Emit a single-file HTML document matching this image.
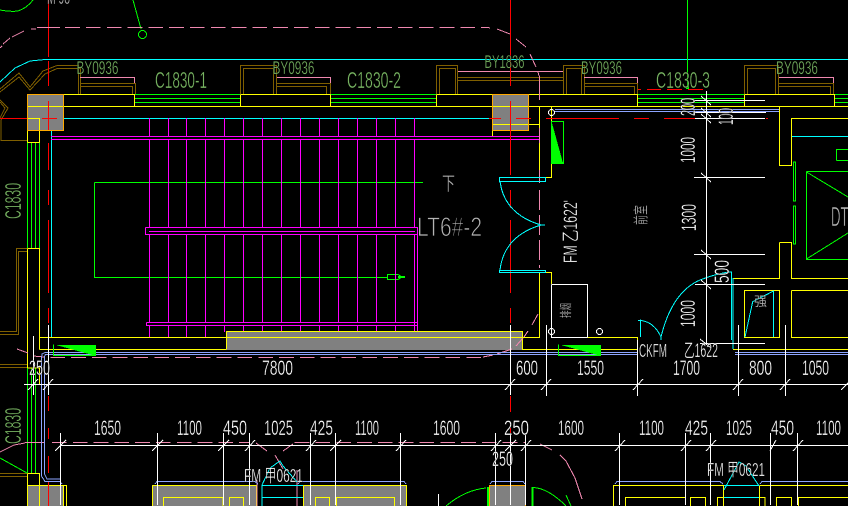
<!DOCTYPE html>
<html><head><meta charset="utf-8"><style>
html,body{margin:0;padding:0;background:#000;width:848px;height:506px;overflow:hidden}
svg{display:block}
text{font-family:"Liberation Sans","Noto Sans CJK SC",sans-serif;stroke:#000;stroke-width:.35px}
.d text,text.d{fill:#fff;font-size:21px}
.g text{fill:#78b562;font-size:18.5px}
.c text{fill:#78b562;font-size:23px}
.h text{fill:#b4b4b4;stroke-width:.6px}
path,rect,circle{fill:none}
</style></head><body>
<svg width="848" height="506" viewBox="0 0 848 506" xmlns="http://www.w3.org/2000/svg" shape-rendering="crispEdges">
<rect x="0" y="0" width="848" height="506" style="fill:#000"/>
<!-- grey fills -->
<g style="fill:#808080">
<rect x="27" y="94" width="37" height="36" style="fill:#808080"/>
<rect x="492" y="94" width="37" height="36" style="fill:#808080"/>
<rect x="226" y="331" width="297" height="19" style="fill:#808080"/>
<rect x="27" y="485" width="37" height="21" style="fill:#808080"/>
<rect x="152" y="485" width="104" height="21" style="fill:#808080"/>
<rect x="303" y="485" width="103" height="21" style="fill:#808080"/>
<rect x="489" y="485" width="37" height="21" style="fill:#808080"/>
</g>
<!-- brown -->
<path stroke="#7f5f00" d="M78.5 94V65.5H57L43 71 30 87 19 73 0 89M80.5 94V68.5H57L45 74 30 90 19 77 0 92M0 100L8 108 1 120V140.5H27M0 102L5 108 0 118M80 83.5H135.5V94M80 86.5H132.5V94
M240.5 94V65.5H276.5V94M243.5 94V68.5H273.5V94M277 83.5H330.5V94M277 86.5H326.5V94
M436.5 94V65.5H457.5V94M439.5 94V68.5H455.5V94M458 77.5H563M458 80.5H563M563.5 94V65.5H584.5V94M566.5 94V68.5H581.5V94
M584 83.5H637.5V94M584 86.5H634.5V94M744.5 94V65.5H778.5V94M747.5 94V68.5H775.5V94M779 83.5H833.5V94M779 86.5H830.5V94
M27 248.5H16.5V331.5H0M27 251.5H18.5V334.5H0M0 364.5H27M0 367.5H27M0 473.5H27M0 476.5H27"/>
<!-- pink solid -->
<path stroke="#f088b0" d="M80 77.5H134.5V83M277 77.5H330.5V83M458 71.5H563M584 77.5H637.5V83M779 77.5H833.5V83"/>
<!-- cyan structure -->
<path stroke="#00ffff" d="M45 59.5H848M45 59.5L30 61 15 68 0 82M64 118.5H489M51.5 130V337M792 136.5H848"/>
<!-- window green -->
<path stroke="#00ff00" d="M134 94.5H240M134 98.5H240M134 102.5H240M134 106.5H240M330 94.5H436M330 98.5H436M330 102.5H436M330 106.5H436M638 94.5H744M638 98.5H744M638 102.5H744M638 106.5H744M834 94.5H848M834 98.5H848M834 102.5H848M834 106.5H848
M27.5 142V248M31.5 142V248M35.5 142V248M39.5 142V248M27.5 368V473M31.5 368V473M35.5 368V473
M94.5 182.5H423M94.5 182.5V277.5H388M387.5 274.5H398L402 277 398 279.5H387.5Z
M687.5 0V88M836.5 160.5V149.5H848M836.5 160.5H848M793.5 162V201H795.5V162ZM793.5 206V244H795.5V206Z
M806.5 171.5H848M806.5 171.5V259.5H848M806.5 172L848 197M806.5 259L848 233
M133 0L141 29M0 10Q10 12 18 11 27 8 33 0M0 458L27 473M446 506Q465 490 486 488M487.5 487V506M488.5 487V506M532 487V506M533 487V506M533 487.5Q548 488 566 506M566 495L571 506"/>
<circle cx="142.5" cy="34.5" r="4" stroke="#00ff00"/>
<path stroke="#00ff00" stroke-width="2" d="M398 277H405"/>
<rect x="686" y="86" width="3" height="3" style="fill:#00ff00"/>
<!-- stair magenta -->
<path stroke="#ff00ff" d="M51 136.5H539M51 139.5H539
M149.5 118V136M168.5 118V136M186.5 118V136M205.5 118V136M224.5 118V136M243.5 118V136M262.5 118V136M281.5 118V136M300.5 118V136M319.5 118V136M338.5 118V136M357.5 118V136M376.5 118V136M395.5 118V136M414.5 118V136
M149.5 140V227M168.5 140V227M186.5 140V227M205.5 140V227M224.5 140V227M243.5 140V227M262.5 140V227M281.5 140V227M300.5 140V227M319.5 140V227M338.5 140V227M357.5 140V227M376.5 140V227M395.5 140V227M414.5 140V227
M149.5 235V322M168.5 235V322M186.5 235V322M205.5 235V322M224.5 235V322M243.5 235V322M262.5 235V322M281.5 235V322M300.5 235V322M319.5 235V322M338.5 235V322M357.5 235V322M376.5 235V322M395.5 235V322M414.5 235V332
M149.5 326V337M168.5 326V337M186.5 326V337M205.5 326V337M224.5 326V332M243.5 326V332M262.5 326V332M281.5 326V332M300.5 326V332M319.5 326V332M338.5 326V332M357.5 326V332M376.5 326V332M395.5 326V332
M417.5 227V332M145.5 227.5H417M145.5 227.5V234.5H417M149 231.5H415M146.5 322.5H417M146.5 322.5V325.5H417"/>
<!-- yellow -->
<path stroke="#ffff00" d="M27.5 94.5H134.5V106.5M240.5 94.5H330.5M240.5 94.5V106.5M330.5 94.5V106.5M436.5 94.5H637.5V106.5M436.5 94.5V106.5M744.5 94.5H834.5V106.5M744.5 94.5V106.5M27.5 106.5H848
M27.5 118.5H39.5V142.5M27.5 142.5H39.5M27.5 130V142.5
M492.5 130V136M492.5 124.5H539.5M539.5 106.5V177.5H551.5V106.5M539.5 272.5H551.5V284M539.5 272.5V337.5H522
M27.5 248.5H39.5V349.5M27.5 248.5V368M39.5 337.5H226M587 337.5H637.5V349.5M39.5 349.5H226M522 349.5H637.5M733 349.5H848M733 278.5V349
M226.5 331.5H522.5V349.5M226.5 331.5V349.5M226.5 337.5H522.5
M779.5 106.5V165.5H791.5V118.5H848M791.5 118.5V165M779.5 242.5H791.5V278.5H848M779.5 242.5V278.5H733M744.5 290.5H779.5V337.5H744.5ZM791.5 290.5V337.5H848M791.5 290.5H848
M27.5 368H39.5V384M27.5 473.5H39.5V506M27.5 473.5V506M27.5 485.5H66.5V506M63.5 485V506
M152.5 485.5H256.5M152.5 485.5V506M256.5 485.5V506M163.5 506V497.5H223V506M229.5 506V497.5H243.5V506
M303.5 485.5H406.5V506M303.5 485.5V506M315.5 506V497.5H329.5V506M336.5 506V497.5H394.5V506
M613.5 506V485.5H723.5V506M625.5 506V497.5H685M690.5 506V497.5H705.5V506M717.5 506V497.5H765V506M759.5 485.5H848M759.5 485.5V506M776.5 506V497.5H791.5V506M798.5 506V497.5H848"/>
<!-- orange outlines -->
<path stroke="#ffaa00" d="M27.5 94.5H63.5V130.5H27.5ZM492.5 94.5H528.5V130.5H492.5ZM489.5 506V485.5H525.5V506"/>
<!-- red -->
<path stroke="#ff0000" d="M48.5 0V57M48.5 61V86M48.5 101V130M48.5 143V170M48.5 190V205M48.5 220V293M48.5 308V323M48.5 396V411M48.5 428V439M48.5 456V473M48.5 481V506
M510.5 0V86M510.5 101V175M510.5 190V208M510.5 220V293M510.5 308V323M510.5 396V412M510.5 428V436
M0 118.5H27M42 118.5H57M489 118.5H501M516 118.5H531M546 118.5H619M634 118.5H649M664 118.5H695M766 118.5H768
M638 89.5H641M647 89.5H661M667 89.5H682M688 89.5H703"/>
<!-- pink dashed -->
<g stroke="#f088b0">
<path d="M37 27.5H60M481 27.5H488L490 28M497 29L510 34M516 39L526 47M530 54L536 67M538 72L539 76M0 48L2 46M3 44L10 38M12 37L24 31M31 29H36"/>
<path stroke-dasharray="14.7 6.1" d="M65.2 27.5H481"/>
<path d="M539.5 76V100M539.5 128V143M539.5 170V183M524 337L528 331M532 325L538 314M483 357L493 355M497 354L512 349M516 346L523 338M17 349L28 353M33 356L45 357"/>
<path stroke-dasharray="20 5" d="M539.5 190V268"/>
<path stroke-dasharray="14.7 6.1" d="M50.3 357.5H483"/>
<path stroke-dasharray="14.7 6.1" d="M52 442.5H250"/>
<path stroke-dasharray="14.7 6.1" d="M294.7 442.5H525"/>
<path d="M25 442.5H45M0 452L14 445 25 443M256 443L267 451M275 455L283 469M283 451L293 444M297 470V506M257 480V506M540 444L552 450M560 455L566 461L575 478 582 499"/>
</g>
<!-- blue -->
<path stroke="#8ca4ff" d="M45 352.5H637M45 354.5H637M735 352.5H848M735 354.5H848M45 352.5L42 354 41.5 358V476L45 481.5H60L62 484M45 354.5 44.5 358V474L47 479H60M555 109.5H779M555 111.5H779
M155 484L157 481.5H255L258 484M298 484L300 481.5H404L406 484M490 484L492 481.5H523L525 484M615 484L617 481.5H720L723 484M760 484L762 481.5H848"/>
<!-- cyan doors -->
<path stroke="#00ffff" d="M499.5 177.5H545.5V181.5H499.5ZM500 181Q504 214 541 225H545M499.5 270.5H545.5V272.5H499.5ZM500 270Q504 236 541 225
M661 337Q672 292 700 280 715 274 729 272H731.5V340M733 278V349M640.5 319.5V337M638 320.5H641Q654 322 661 337V340
M745 337L752.7 301.7 773.5 291V337
M262 485L270 468 280 461 283 466 297 482M262.5 485.5H303M262.5 497.5H303M262 485V506
M724 490L739 462 746 466 759 486M724 485.5H759M724 497.5H759"/>
<!-- green triangles -->
<polygon points="552,123 563,163 552,163" style="fill:#00ff00"/>
<rect x="551.5" y="121.5" width="12" height="42" stroke="#00ff00"/>
<polygon points="56,345 96,345 96,356" style="fill:#00ff00"/>
<path stroke="#00ff00" d="M53.5 344.5V355.5H95.5"/>
<polygon points="561,345 601,345 601,356" style="fill:#00ff00"/>
<path stroke="#00ff00" d="M558.5 344.5V355.5H601"/>
<!-- white lines -->
<path stroke="#ffffff" d="M706.5 91V343M695 100.5H765M695 112.5H766M695 118.5H765M694 177.5H765M694 254.5H765M695 284.5H765M700 343.5H765
M551.5 284.5H587.5V337.5M551.5 284.5V337.5H587.5
M24 384.5H848M33.5 336V395M48.5 325V395M510.5 325V395M546.5 325V396M637.5 340V396M738.5 325V396M785.5 325V396
M60 445.5H848M60.5 433V505M157.5 433V505M223.5 433V505M249.5 433V505M310.5 433V505M335.5 433V505M400.5 433V505M495.5 433V505M510.5 433V505M525.5 433V505M619.5 433V505M685.5 433V505M710.5 433V505M770.5 433V505M797.5 433V505M438.5 494V506
M28 390L38 379M43 390L53 379M505 390L515 379M541 390L551 379M633 390L643 379M733 390L743 379M780 390L790 379M841 390L848 383
M55 451L66 440M152 451L163 440M218 451L229 440M245 451L255 440M306 451L316 440M330 451L341 440M396 451L406 440M491 451L501 440M505 451L516 440M521 451L531 440M615 451L625 440M681 451L691 440M706 451L716 440M770 451L776 440M793 451L803 440
M701 96L711 105M701 108L711 117M701 114L711 123M701 173L711 182M701 250L711 259M701 280L711 289M700 339L711 348"/>
<circle cx="551.5" cy="112.5" r="3" stroke="#fff"/>
<circle cx="551.5" cy="331.5" r="3" stroke="#fff"/>
<circle cx="599.5" cy="331.5" r="3" stroke="#fff"/>
<!-- green labels -->
<g class="g" text-rendering="geometricPrecision">
<text x="76.5" y="74" textLength="42" lengthAdjust="spacingAndGlyphs">BY0936</text>
<text x="272.5" y="74" textLength="42" lengthAdjust="spacingAndGlyphs">BY0936</text>
<text x="484.5" y="68" textLength="40" lengthAdjust="spacingAndGlyphs">BY1836</text>
<text x="581" y="74" textLength="41" lengthAdjust="spacingAndGlyphs">BY0936</text>
<text x="776" y="74" textLength="42" lengthAdjust="spacingAndGlyphs">BY0936</text>
</g>
<g class="c">
<text x="155" y="88" textLength="52" lengthAdjust="spacingAndGlyphs">C1830-1</text>
<text x="347" y="88" textLength="54" lengthAdjust="spacingAndGlyphs">C1830-2</text>
<text x="656" y="88" textLength="54" lengthAdjust="spacingAndGlyphs">C1830-3</text>
<text transform="translate(21,219) rotate(-90)" textLength="36" lengthAdjust="spacingAndGlyphs">C1830</text>
<text transform="translate(21,444) rotate(-90)" textLength="36" lengthAdjust="spacingAndGlyphs">C1830</text>
</g>
<!-- dim text -->
<g class="d">
<text x="47" y="4" textLength="23" lengthAdjust="spacingAndGlyphs" style="fill:#bbb">M 98</text>
<text x="262" y="375" textLength="31" lengthAdjust="spacingAndGlyphs">7800</text>
<text x="516" y="375" textLength="22" lengthAdjust="spacingAndGlyphs">600</text>
<text x="577" y="375" textLength="27" lengthAdjust="spacingAndGlyphs">1550</text>
<text x="673" y="375" textLength="27" lengthAdjust="spacingAndGlyphs">1700</text>
<text x="749" y="375" textLength="23" lengthAdjust="spacingAndGlyphs">800</text>
<text x="802" y="375" textLength="27" lengthAdjust="spacingAndGlyphs">1050</text>
<text x="29" y="375" textLength="21" lengthAdjust="spacingAndGlyphs">250</text>
<text x="94" y="435" textLength="27" lengthAdjust="spacingAndGlyphs">1650</text>
<text x="177" y="435" textLength="25" lengthAdjust="spacingAndGlyphs">1100</text>
<text x="223" y="435" textLength="24" lengthAdjust="spacingAndGlyphs">450</text>
<text x="264" y="435" textLength="29" lengthAdjust="spacingAndGlyphs">1025</text>
<text x="310" y="435" textLength="23" lengthAdjust="spacingAndGlyphs">425</text>
<text x="355" y="435" textLength="24" lengthAdjust="spacingAndGlyphs">1100</text>
<text x="433" y="435" textLength="27" lengthAdjust="spacingAndGlyphs">1600</text>
<text x="504" y="435" textLength="25" lengthAdjust="spacingAndGlyphs">250</text>
<text x="492" y="466" textLength="21" lengthAdjust="spacingAndGlyphs">250</text>
<text x="558" y="435" textLength="26" lengthAdjust="spacingAndGlyphs">1600</text>
<text x="639" y="435" textLength="25" lengthAdjust="spacingAndGlyphs">1100</text>
<text x="685" y="435" textLength="23" lengthAdjust="spacingAndGlyphs">425</text>
<text x="726" y="435" textLength="26" lengthAdjust="spacingAndGlyphs">1025</text>
<text x="771" y="435" textLength="23" lengthAdjust="spacingAndGlyphs">450</text>
<text x="816" y="435" textLength="25" lengthAdjust="spacingAndGlyphs">1100</text>
<text x="639" y="357" textLength="28" lengthAdjust="spacingAndGlyphs" style="font-size:18px">CKFM</text>
<text x="684" y="357" textLength="34" lengthAdjust="spacingAndGlyphs" style="font-size:19px">乙1622</text>
<text x="244" y="482" textLength="59" lengthAdjust="spacingAndGlyphs" style="font-size:18px">FM 甲0621</text>
<text x="707" y="476" textLength="58" lengthAdjust="spacingAndGlyphs" style="font-size:18px">FM 甲0621</text>
<text transform="translate(695,116) rotate(-90)" textLength="18" lengthAdjust="spacingAndGlyphs">200</text>
<text transform="translate(733,125) rotate(-90)" textLength="17" lengthAdjust="spacingAndGlyphs">100</text>
<text transform="translate(695,163) rotate(-90)" textLength="26" lengthAdjust="spacingAndGlyphs">1000</text>
<text transform="translate(696,231) rotate(-90)" textLength="27" lengthAdjust="spacingAndGlyphs">1300</text>
<text transform="translate(695,327) rotate(-90)" textLength="27" lengthAdjust="spacingAndGlyphs">1000</text>
<text transform="translate(729,283) rotate(-90)" textLength="23" lengthAdjust="spacingAndGlyphs">500</text>
<text transform="translate(577,263) rotate(-90)" textLength="63" lengthAdjust="spacingAndGlyphs" style="font-size:19px">FM 乙1622'</text>
</g>
<!-- grey text -->
<g class="h">
<text x="417" y="236" textLength="65" lengthAdjust="spacingAndGlyphs" style="font-size:27px;stroke-width:.8px">LT6#-2</text>
<text x="442" y="190" textLength="13" lengthAdjust="spacingAndGlyphs" style="font-size:19px;stroke-width:.3px">下</text>
<text x="831" y="226" textLength="17.5" lengthAdjust="spacingAndGlyphs" style="font-size:28px">DT</text>
<text transform="translate(646,225) rotate(-90)" textLength="20" lengthAdjust="spacingAndGlyphs" style="font-size:15px;stroke-width:.2px">前室</text>
<text transform="translate(570,318) rotate(-90)" textLength="15" lengthAdjust="spacingAndGlyphs" style="font-size:12px;stroke-width:.1px">排烟</text>
<text x="754" y="306" textLength="13" lengthAdjust="spacingAndGlyphs" style="font-size:13px;stroke-width:.1px">强</text>
</g>
</svg>
</body></html>
